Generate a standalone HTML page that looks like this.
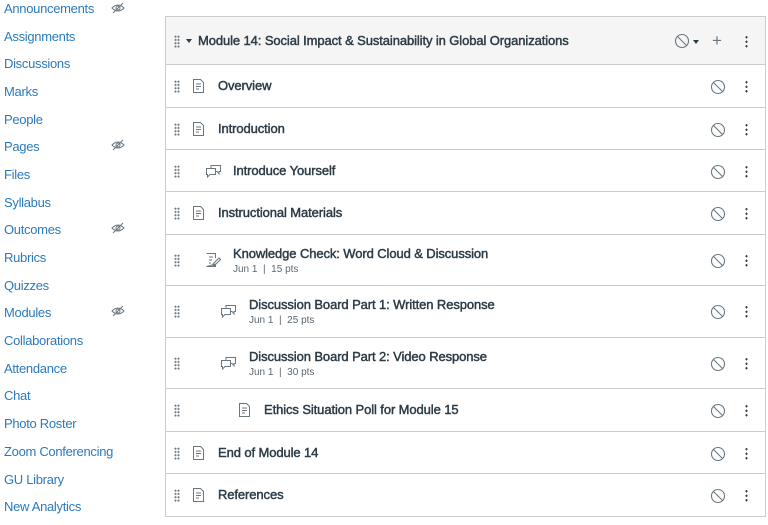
<!DOCTYPE html>
<html><head><meta charset="utf-8"><style>
*{box-sizing:border-box;margin:0;padding:0}
body{width:768px;height:525px;overflow:hidden;background:#fff;font-family:"Liberation Sans",sans-serif;color:#2d3b45;position:relative}
.nav a{position:absolute;left:4px;font-size:13px;letter-spacing:-0.3px;color:#2b7abc;text-decoration:none;line-height:16px}
.eye{position:absolute;left:111px}
.mod{position:absolute;left:165px;top:16px;width:601px;border:1px solid #c7cdd1;border-bottom:none}
.hdr{height:48px;background:#f5f5f5;border-bottom:1px solid #c7cdd1;position:relative}
.row{position:relative;border-bottom:1px solid #c7cdd1}
.drag{position:absolute;left:8px;width:6px;height:13px;background-image:radial-gradient(circle,#6b7780 0.9px,transparent 1.1px);background-size:3px 3.3px}
.ttl{position:absolute;font-size:13px;font-weight:normal;-webkit-text-stroke:0.45px #2d3b45;color:#2d3b45;white-space:nowrap;letter-spacing:-0.1px}
.sub{position:absolute;font-size:10px;color:#5b6770;white-space:nowrap}
.ic{position:absolute}
.ban{position:absolute;left:544px}
.kb{position:absolute;left:579px;width:3px;height:13px;background-image:radial-gradient(circle,#2d3b45 1px,transparent 1.2px);background-size:3px 4.5px}
</style></head><body>
<div class="nav">
<a style="top:1px">Announcements</a>
<a style="top:29px">Assignments</a>
<a style="top:56px">Discussions</a>
<a style="top:84px">Marks</a>
<a style="top:112px">People</a>
<a style="top:139px">Pages</a>
<a style="top:167px">Files</a>
<a style="top:195px">Syllabus</a>
<a style="top:222px">Outcomes</a>
<a style="top:250px">Rubrics</a>
<a style="top:278px">Quizzes</a>
<a style="top:305px">Modules</a>
<a style="top:333px">Collaborations</a>
<a style="top:361px">Attendance</a>
<a style="top:388px">Chat</a>
<a style="top:416px">Photo Roster</a>
<a style="top:444px">Zoom Conferencing</a>
<a style="top:472px">GU Library</a>
<a style="top:499px">New Analytics</a>
</div>
<svg class="eye" style="top:2px" width="14" height="12" viewBox="0 0 14 12"><path d="M1 6Q7 0 13 6Q7 12 1 6Z" fill="none" stroke="#6b7780"/><circle cx="7" cy="6" r="2" fill="none" stroke="#6b7780"/><path d="M2 11L12 1" stroke="#6b7780"/></svg>
<svg class="eye" style="top:139px" width="14" height="12" viewBox="0 0 14 12"><path d="M1 6Q7 0 13 6Q7 12 1 6Z" fill="none" stroke="#6b7780"/><circle cx="7" cy="6" r="2" fill="none" stroke="#6b7780"/><path d="M2 11L12 1" stroke="#6b7780"/></svg>
<svg class="eye" style="top:222px" width="14" height="12" viewBox="0 0 14 12"><path d="M1 6Q7 0 13 6Q7 12 1 6Z" fill="none" stroke="#6b7780"/><circle cx="7" cy="6" r="2" fill="none" stroke="#6b7780"/><path d="M2 11L12 1" stroke="#6b7780"/></svg>
<svg class="eye" style="top:305px" width="14" height="12" viewBox="0 0 14 12"><path d="M1 6Q7 0 13 6Q7 12 1 6Z" fill="none" stroke="#6b7780"/><circle cx="7" cy="6" r="2" fill="none" stroke="#6b7780"/><path d="M2 11L12 1" stroke="#6b7780"/></svg>

<div class="mod">
<div class="hdr">
<div class="drag" style="top:18px"></div>
<div style="position:absolute;left:20px;top:22px;width:0;height:0;border-left:3px solid transparent;border-right:3px solid transparent;border-top:4px solid #2d3b45"></div>
<div class="ttl" style="left:32px;top:16px">Module 14: Social Impact &amp; Sustainability in Global Organizations</div>
<svg style="position:absolute;left:508px;top:16px" width="16" height="16" viewBox="0 0 16 16"><circle cx="8" cy="8" r="6.5" fill="none" stroke="#6b7780" stroke-width="1.1"/><path d="M3.5 3.5L12.5 12.5" stroke="#6b7780" stroke-width="1.1"/></svg>
<div style="position:absolute;left:527px;top:23px;border-left:3px solid transparent;border-right:3px solid transparent;border-top:4px solid #2d3b45"></div>
<div style="position:absolute;left:546px;top:14px;font-size:17px;color:#6b7780">+</div>
<div class="kb" style="top:18px"></div>
</div>
<div class="row" style="height:43px"><div class="drag" style="top:15px"></div>
<svg class="ic" style="left:27px;top:14px" width="11" height="14" viewBox="0 0 11 14"><path d="M.5.5H7.5L10.5 3.5V13.5H.5Z" fill="none" stroke="#6b7780"/><path d="M3 5H8M3 7.5H8M3 10H6" stroke="#6b7780"/></svg>
<div class="ttl" style="left:52px;top:13px">Overview</div>
<svg class="ban" style="top:14px" width="16" height="16" viewBox="0 0 16 16"><circle cx="8" cy="8" r="6.5" fill="none" stroke="#6b7780" stroke-width="1.1"/><path d="M3.5 3.5L12.5 12.5" stroke="#6b7780" stroke-width="1.1"/></svg><div class="kb" style="top:15px"></div></div>

<div class="row" style="height:42px"><div class="drag" style="top:15px"></div>
<svg class="ic" style="left:27px;top:14px" width="11" height="14" viewBox="0 0 11 14"><path d="M.5.5H7.5L10.5 3.5V13.5H.5Z" fill="none" stroke="#6b7780"/><path d="M3 5H8M3 7.5H8M3 10H6" stroke="#6b7780"/></svg>
<div class="ttl" style="left:52px;top:13px">Introduction</div>
<svg class="ban" style="top:14px" width="16" height="16" viewBox="0 0 16 16"><circle cx="8" cy="8" r="6.5" fill="none" stroke="#6b7780" stroke-width="1.1"/><path d="M3.5 3.5L12.5 12.5" stroke="#6b7780" stroke-width="1.1"/></svg><div class="kb" style="top:15px"></div></div>

<div class="row" style="height:42px"><div class="drag" style="top:15px"></div>
<svg class="ic" style="left:40px;top:15px" width="15" height="13" viewBox="0 0 15 13"><path d="M.5 3.5H9.5V9.5H4L1.5 12V9.5H.5Z" fill="none" stroke="#6b7780"/><path d="M5 3.5V.5H14.5V6.5H13V9L11 6.5H9.5" fill="none" stroke="#6b7780"/></svg>
<div class="ttl" style="left:67px;top:13px">Introduce Yourself</div>
<svg class="ban" style="top:14px" width="16" height="16" viewBox="0 0 16 16"><circle cx="8" cy="8" r="6.5" fill="none" stroke="#6b7780" stroke-width="1.1"/><path d="M3.5 3.5L12.5 12.5" stroke="#6b7780" stroke-width="1.1"/></svg><div class="kb" style="top:15px"></div></div>

<div class="row" style="height:43px"><div class="drag" style="top:15px"></div>
<svg class="ic" style="left:27px;top:14px" width="11" height="14" viewBox="0 0 11 14"><path d="M.5.5H7.5L10.5 3.5V13.5H.5Z" fill="none" stroke="#6b7780"/><path d="M3 5H8M3 7.5H8M3 10H6" stroke="#6b7780"/></svg>
<div class="ttl" style="left:52px;top:13px">Instructional Materials</div>
<svg class="ban" style="top:14px" width="16" height="16" viewBox="0 0 16 16"><circle cx="8" cy="8" r="6.5" fill="none" stroke="#6b7780" stroke-width="1.1"/><path d="M3.5 3.5L12.5 12.5" stroke="#6b7780" stroke-width="1.1"/></svg><div class="kb" style="top:15px"></div></div>

<div class="row" style="height:51px"><div class="drag" style="top:19px"></div>
<svg class="ic" style="left:40px;top:18px" width="15" height="14" viewBox="0 0 15 14"><path d="M.5.5H9.5V5M9.5 11V13.5H.5Z" fill="none" stroke="#6b7780"/><path d="M3 4H7M3 7H6M3 10H5" stroke="#6b7780"/><path d="M7 11L13 5L14.5 6.5L8.5 12.5H7Z" fill="none" stroke="#6b7780"/></svg>
<div class="ttl" style="left:67px;top:11px">Knowledge Check: Word Cloud &amp; Discussion</div>
<div class="sub" style="left:67px;top:29px">Jun 1 &nbsp;|&nbsp; 15 pts</div>
<svg class="ban" style="top:18px" width="16" height="16" viewBox="0 0 16 16"><circle cx="8" cy="8" r="6.5" fill="none" stroke="#6b7780" stroke-width="1.1"/><path d="M3.5 3.5L12.5 12.5" stroke="#6b7780" stroke-width="1.1"/></svg><div class="kb" style="top:19px"></div></div>

<div class="row" style="height:52px"><div class="drag" style="top:19px"></div>
<svg class="ic" style="left:55px;top:19px" width="15" height="13" viewBox="0 0 15 13"><path d="M.5 3.5H9.5V9.5H4L1.5 12V9.5H.5Z" fill="none" stroke="#6b7780"/><path d="M5 3.5V.5H14.5V6.5H13V9L11 6.5H9.5" fill="none" stroke="#6b7780"/></svg>
<div class="ttl" style="left:83px;top:11px">Discussion Board Part 1: Written Response</div>
<div class="sub" style="left:83px;top:29px">Jun 1 &nbsp;|&nbsp; 25 pts</div>
<svg class="ban" style="top:18px" width="16" height="16" viewBox="0 0 16 16"><circle cx="8" cy="8" r="6.5" fill="none" stroke="#6b7780" stroke-width="1.1"/><path d="M3.5 3.5L12.5 12.5" stroke="#6b7780" stroke-width="1.1"/></svg><div class="kb" style="top:19px"></div></div>

<div class="row" style="height:51px"><div class="drag" style="top:19px"></div>
<svg class="ic" style="left:55px;top:19px" width="15" height="13" viewBox="0 0 15 13"><path d="M.5 3.5H9.5V9.5H4L1.5 12V9.5H.5Z" fill="none" stroke="#6b7780"/><path d="M5 3.5V.5H14.5V6.5H13V9L11 6.5H9.5" fill="none" stroke="#6b7780"/></svg>
<div class="ttl" style="left:83px;top:11px">Discussion Board Part 2: Video Response</div>
<div class="sub" style="left:83px;top:29px">Jun 1 &nbsp;|&nbsp; 30 pts</div>
<svg class="ban" style="top:18px" width="16" height="16" viewBox="0 0 16 16"><circle cx="8" cy="8" r="6.5" fill="none" stroke="#6b7780" stroke-width="1.1"/><path d="M3.5 3.5L12.5 12.5" stroke="#6b7780" stroke-width="1.1"/></svg><div class="kb" style="top:19px"></div></div>

<div class="row" style="height:43px"><div class="drag" style="top:15px"></div>
<svg class="ic" style="left:73px;top:14px" width="11" height="14" viewBox="0 0 11 14"><path d="M.5.5H7.5L10.5 3.5V13.5H.5Z" fill="none" stroke="#6b7780"/><path d="M3 5H8M3 7.5H8M3 10H6" stroke="#6b7780"/></svg>
<div class="ttl" style="left:98px;top:13px">Ethics Situation Poll for Module 15</div>
<svg class="ban" style="top:14px" width="16" height="16" viewBox="0 0 16 16"><circle cx="8" cy="8" r="6.5" fill="none" stroke="#6b7780" stroke-width="1.1"/><path d="M3.5 3.5L12.5 12.5" stroke="#6b7780" stroke-width="1.1"/></svg><div class="kb" style="top:15px"></div></div>

<div class="row" style="height:42px"><div class="drag" style="top:15px"></div>
<svg class="ic" style="left:27px;top:14px" width="11" height="14" viewBox="0 0 11 14"><path d="M.5.5H7.5L10.5 3.5V13.5H.5Z" fill="none" stroke="#6b7780"/><path d="M3 5H8M3 7.5H8M3 10H6" stroke="#6b7780"/></svg>
<div class="ttl" style="left:52px;top:13px">End of Module 14</div>
<svg class="ban" style="top:14px" width="16" height="16" viewBox="0 0 16 16"><circle cx="8" cy="8" r="6.5" fill="none" stroke="#6b7780" stroke-width="1.1"/><path d="M3.5 3.5L12.5 12.5" stroke="#6b7780" stroke-width="1.1"/></svg><div class="kb" style="top:15px"></div></div>

<div class="row" style="height:43px"><div class="drag" style="top:15px"></div>
<svg class="ic" style="left:27px;top:14px" width="11" height="14" viewBox="0 0 11 14"><path d="M.5.5H7.5L10.5 3.5V13.5H.5Z" fill="none" stroke="#6b7780"/><path d="M3 5H8M3 7.5H8M3 10H6" stroke="#6b7780"/></svg>
<div class="ttl" style="left:52px;top:13px">References</div>
<svg class="ban" style="top:14px" width="16" height="16" viewBox="0 0 16 16"><circle cx="8" cy="8" r="6.5" fill="none" stroke="#6b7780" stroke-width="1.1"/><path d="M3.5 3.5L12.5 12.5" stroke="#6b7780" stroke-width="1.1"/></svg><div class="kb" style="top:15px"></div></div>
</div>
</body></html>
